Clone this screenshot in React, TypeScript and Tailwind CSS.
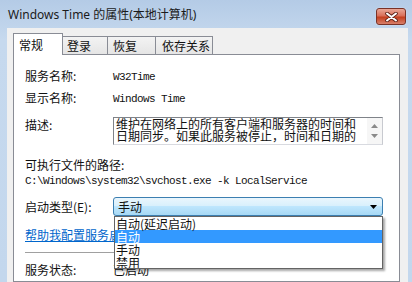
import React from "react";

const mono = "font-['Liberation_Mono',monospace] text-[11px] tracking-[-0.6px]";

function Row({ label, children }: { label: string; children?: React.ReactNode }) {
  return (
    <div className="flex h-[16px] items-center">
      <div className="w-[88px] shrink-0 leading-[16px]">{label}</div>
      <div className="flex-1 leading-[16px]">{children}</div>
    </div>
  );
}

export default function App() {
  return (
    <div className="w-[412px] h-[282px] overflow-hidden flex flex-col bg-[linear-gradient(to_bottom,#b4cbe6,#c6d9ee_40px,#c3d7ed)] font-['Noto_Sans','Noto_Sans_CJK_SC',sans-serif] text-[12px] text-[#111]">
      {/* Title bar */}
      <div className="h-[28px] shrink-0 flex items-start pl-[8px] pr-[6px]">
        <span className="flex-1 mt-[7px] leading-[16px] text-[12px] text-[#1b1b1b] font-['Noto_Sans','Noto_Sans_CJK_SC',sans-serif]">
          Windows Time 的属性(本地计算机)
        </span>
        <div className="mt-[8px] w-[30px] h-[17px] rounded-[3px] border border-[#7a3226] bg-[linear-gradient(to_bottom,#e9a796,#d9705a_45%,#c4401f_55%,#d8806a)] flex items-center justify-center shadow-[0_0_1px_#fff]">
          <svg width="13" height="10" viewBox="0 0 13 10">
            <path d="M2 1.5 L11 8.5 M11 1.5 L2 8.5" stroke="#5a1f15" strokeWidth="3.6" strokeLinecap="round" />
            <path d="M2 1.5 L11 8.5 M11 1.5 L2 8.5" stroke="#ffffff" strokeWidth="2" strokeLinecap="round" />
          </svg>
        </div>
      </div>

      {/* Client area */}
      <div className="flex-1 ml-[7px] mr-[4px] bg-[#f0f0f0] pl-[6px] pr-[8px] pt-[5px] flex flex-col font-['Noto_Sans_CJK_SC',sans-serif]">
        {/* Tabs */}
        <div className="flex items-end h-[21px] shrink-0">
          <div className="relative z-10 w-[50px] h-[22px] -mb-[1px] bg-white border border-b-0 border-[#898c95] pl-[5px] flex items-center leading-none">
            常规
          </div>
          <div className="w-[45px] h-[18px] bg-[linear-gradient(to_bottom,#f3f3f3,#e5e5e5)] border-t border-r border-[#898c95] pl-[4px] flex items-center leading-none">
            登录
          </div>
          <div className="w-[48px] h-[18px] bg-[linear-gradient(to_bottom,#f3f3f3,#e5e5e5)] border-t border-r border-[#898c95] pl-[5px] flex items-center leading-none">
            恢复
          </div>
          <div className="w-[57px] h-[18px] bg-[linear-gradient(to_bottom,#f3f3f3,#e5e5e5)] border-t border-r border-[#898c95] pl-[6px] flex items-center leading-none whitespace-nowrap overflow-hidden">
            依存关系
          </div>
        </div>

        {/* Panel */}
        <div className="flex-1 bg-white border border-[#898c95] pl-[11px] pr-[16px] pt-[13px] flex flex-col">
          <Row label="服务名称:">
            <span className={mono}>W32Time</span>
          </Row>
          <div className="mt-[6px]">
            <Row label="显示名称:">
              <span className={mono}>Windows Time</span>
            </Row>
          </div>

          {/* Description */}
          <div className="mt-[11px] flex items-start">
            <div className="w-[88px] shrink-0 h-[16px] leading-[16px]">描述:</div>
            <div className="flex-1 h-[28px] border border-[#7f8389] border-r-[#c8cad0] border-b-[#d8dae0] flex overflow-hidden">
              <div className="flex-1 pl-[2px] leading-[12px] overflow-hidden whitespace-nowrap">
                <div>维护在网络上的所有客户端和服务器的时间和</div>
                <div>日期同步。如果此服务被停止，时间和日期的</div>
              </div>
              <div className="w-[15px] shrink-0 bg-[#f6f6f6] flex flex-col items-center justify-between py-[6px]">
                <svg width="7" height="4" viewBox="0 0 7 4">
                  <path d="M0 4 L3.5 0 L7 4 Z" fill="#8a8a8a" />
                </svg>
                <svg width="7" height="4" viewBox="0 0 7 4">
                  <path d="M0 0 L3.5 4 L7 0 Z" fill="#8a8a8a" />
                </svg>
              </div>
            </div>
          </div>

          <div className="mt-[12px] h-[16px] leading-[16px]">可执行文件的路径:</div>
          <div className={`h-[16px] leading-[16px] whitespace-nowrap ${mono}`}>
            C:\Windows\system32\svchost.exe -k LocalService
          </div>

          {/* Startup type */}
          <div className="mt-[8px] flex items-center">
            <div className="w-[88px] shrink-0 leading-[16px]">启动类型(E):</div>
            <div className="relative flex-1">
              <div className="h-[19px] rounded-[3px] border border-[#3c7fb1] bg-[linear-gradient(to_bottom,#eaf6fd,#d9f0fc_45%,#bee6fd_50%,#a7d9f5)] flex items-center pl-[4px] pr-[5px]">
                <span className="flex-1 leading-none">手动</span>
                <svg width="7" height="4" viewBox="0 0 7 4">
                  <path d="M0 0 L3.5 4 L7 0 Z" fill="#000" />
                </svg>
              </div>
              {/* Dropdown list */}
              <div className="absolute z-20 top-[19px] left-[1px] right-0 bg-white border border-[#646464] shadow-[2px_2px_2px_rgba(0,0,0,0.35)] leading-[13px]">
                <div className="h-[13px] pl-[1px]">自动(延迟启动)</div>
                <div className="h-[13px] pl-[1px] bg-[#3399ff] text-white">自动</div>
                <div className="h-[13px] pl-[1px]">手动</div>
                <div className="h-[12px] pl-[1px] overflow-hidden">禁用</div>
              </div>
            </div>
          </div>

          <div className="mt-[11px] h-[16px] leading-[16px] text-[#0066cc] underline whitespace-nowrap">
            帮助我配置服务启动选项。
          </div>

          <div className="mt-[9px] h-px bg-[#a0a0a0]" />

          <div className="mt-[9px]">
            <Row label="服务状态:">已启动</Row>
          </div>
        </div>
      </div>
    </div>
  );
}
